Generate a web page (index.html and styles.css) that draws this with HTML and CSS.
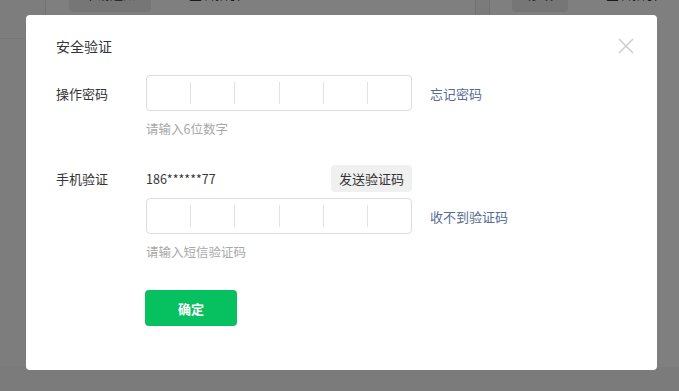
FILE: index.html
```html
<!DOCTYPE html>
<html lang="zh-CN">
<head>
  <meta charset="UTF-8">
  <meta name="viewport" content="width=device-width, initial-scale=1.0">
  <title>安全验证</title>
  <link rel="stylesheet" href="styles.css">
</head>
<body>
  <!-- page behind the dialog, scrolled a little -->
  <div class="page">
    <div class="sidebar"></div>
    <div class="main">
      <div class="toolbar">
        <span class="tab tab-active">申请通知</span>
        <span class="tab">查看指引</span>
      </div>
      <div class="card"></div>
    </div>
    <div class="side-panel">
      <div class="toolbar toolbar-right">
        <span class="tab tab-active">修改</span>
        <span class="tab">查看指引</span>
      </div>
    </div>
  </div>

  <div class="mask">
    <div class="dialog">
      <div class="dialog-head">
        <h3 class="dialog-title">安全验证</h3>
        <button class="close" aria-label="关闭">
          <svg width="16" height="16" viewBox="0 0 16 16">
            <path d="M1 1L15 15M15 1L1 15" stroke="#cfcfcf" stroke-width="1.6" fill="none"/>
          </svg>
        </button>
      </div>

      <div class="form">
        <div class="form-row">
          <label class="form-label">操作密码</label>
          <div class="field">
            <div class="code-box">
              <span></span><span></span><span></span><span></span><span></span><span></span>
            </div>
          </div>
          <a href="#" class="link">忘记密码</a>
        </div>
        <p class="tips">请输入6位数字</p>

        <div class="form-row form-row-phone">
          <label class="form-label">手机验证</label>
          <div class="field field-phone">
            <span class="phone">186******77</span>
            <button class="btn-send">发送验证码</button>
          </div>
        </div>
        <div class="form-row form-row-code">
          <span class="form-label"></span>
          <div class="field">
            <div class="code-box">
              <span></span><span></span><span></span><span></span><span></span><span></span>
            </div>
          </div>
          <a href="#" class="link">收不到验证码</a>
        </div>
        <p class="tips">请输入短信验证码</p>

        <div class="form-foot">
          <button class="btn-primary">确定</button>
        </div>
      </div>
    </div>
  </div>
</body>
</html>
```

FILE: styles.css
```css
* {
  box-sizing: border-box;
}
html, body {
  height: 100%;
}
body {
  margin: 0;
  font-family: "Noto Sans CJK SC", "Noto Sans", sans-serif;
  color: #353535;
  background: #f7f7f7;
  overflow: hidden;
}

/* background page */
.page {
  display: flex;
  height: 100%;
  margin-top: -24px;
}
.sidebar {
  width: 46px;
  border-right: 1px solid #e4e4e4;
  background: #fafafa;
}
.main {
  width: 430px;
  border-right: 1px solid #e4e4e4;
  background: #fff;
}
.side-panel {
  flex: 1;
  margin-left: 13px;
  border-left: 1px solid #e4e4e4;
  background: #fff;
}
.toolbar {
  display: flex;
  align-items: center;
  gap: 24px;
  height: 36px;
  padding-left: 23px;
  font-size: 13px;
}
.toolbar-right {
  padding-left: 22px;
}
.tab {
  padding: 0 14px;
  line-height: 36px;
}
.tab-active {
  background: #ececec;
  border-radius: 4px;
  padding: 0 15px;
}
.card {
  margin: 26px 0 0 -46px;
  height: 300px;
  border-top: 1px solid #ececec;
}

/* mask + dialog */
.mask {
  position: fixed;
  inset: 0;
  background: rgba(0, 0, 0, 0.5);
  padding: 15px 0 0 26px;
}
.dialog {
  width: 631px;
  height: 355px;
  background: #fff;
  border-radius: 4px;
  padding: 0 30px;
}
.dialog-head {
  display: flex;
  justify-content: space-between;
  align-items: center;
  height: 60px;
  padding-top: 1px;
}
.dialog-title {
  margin: 0;
  font-size: 14px;
  font-weight: normal;
  color: #353535;
}
.close {
  border: 0;
  background: none;
  padding: 0;
  margin-right: -7px;
  width: 16px;
  height: 16px;
  cursor: pointer;
}
.close svg {
  display: block;
}

.form {
  font-size: 13px;
}
.form-row {
  display: flex;
  align-items: center;
}
.form-label {
  width: 90px;
  color: #353535;
}
.field {
  width: 266px;
}
.code-box {
  display: flex;
  height: 36px;
  border: 1px solid #dcdcdc;
  border-radius: 4px;
}
.code-box span {
  flex: 1;
  margin: 6px 0;
}
.code-box span + span {
  border-left: 1px solid #e2e2e2;
}
.link {
  margin-left: 18px;
  color: #576b95;
  text-decoration: none;
}
.tips {
  margin: 9px 0 0 90px;
  font-size: 12.5px;
  line-height: 18px;
  color: #a8a8a8;
}

.form-row-phone {
  margin-top: 27px;
}
.field-phone {
  display: flex;
  justify-content: space-between;
  align-items: center;
}
.phone {
  font-size: 12.5px;
}
.btn-send {
  height: 27px;
  padding: 0 8px;
  border: 0;
  border-radius: 4px;
  background: #f0f0f0;
  color: #353535;
  font-family: inherit;
  font-size: 13px;
}
.form-row-code {
  margin-top: 6px;
}

.form-foot {
  margin: 29px 0 0 89px;
}
.btn-primary {
  width: 92px;
  height: 36px;
  border: 0;
  border-radius: 4px;
  background: #07c160;
  color: #fff;
  font-family: inherit;
  font-size: 13px;
  font-weight: bold;
}
```
